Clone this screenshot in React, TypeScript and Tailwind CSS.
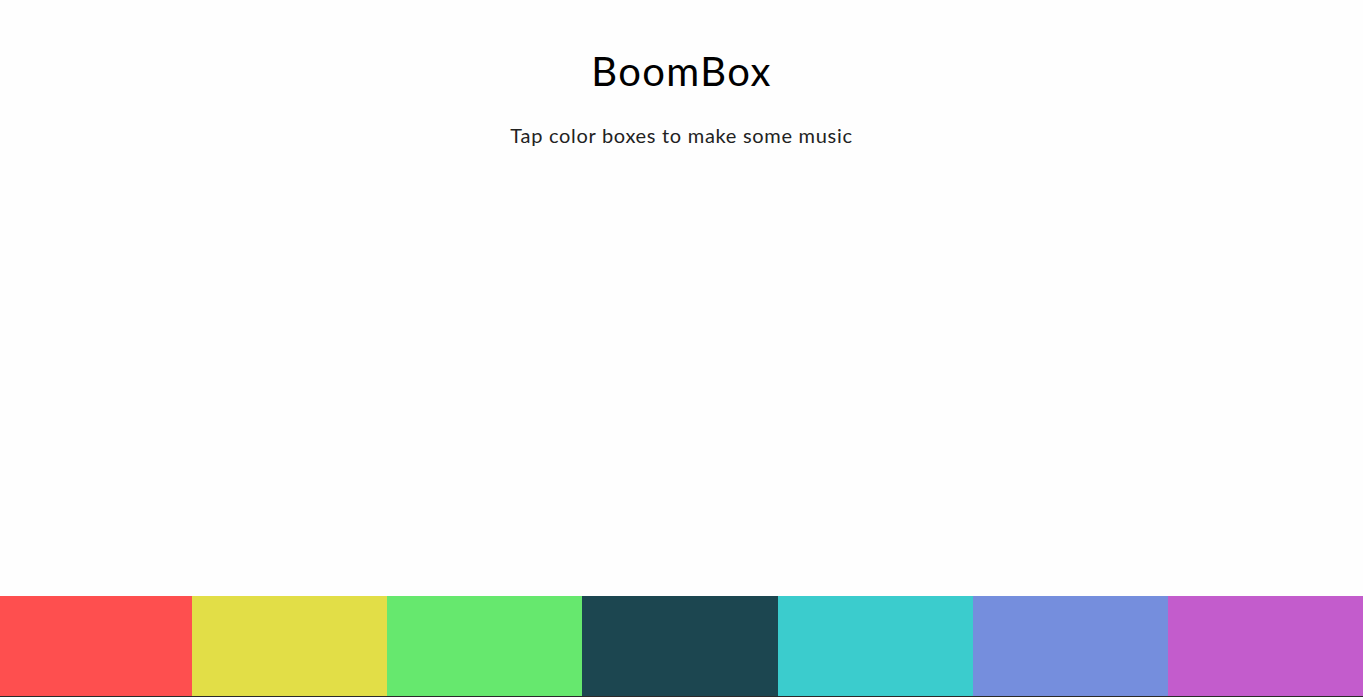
const boxes = [
  "bg-[#fe4f4f] w-[192px]",
  "bg-[#e2de47] flex-1",
  "bg-[#66e86e] flex-1",
  "bg-[#1c4650] flex-1",
  "bg-[#3bcccd] flex-1",
  "bg-[#758edd] flex-1",
  "bg-[#c35ccc] flex-1",
];

export default function App() {
  return (
    <div className="h-[697px] w-full bg-[#fefefe] flex flex-col font-['Lato',sans-serif] text-black overflow-hidden">
      <header className="flex flex-col items-center pt-[46px]">
        <h1 className="text-[40px] leading-[50px] font-normal tracking-[1.4px]">BoomBox</h1>
        <p className="mt-[25px] text-[20px] leading-[28px] text-[#222] tracking-[0.7px]">
          Tap color boxes to make some music
        </p>
      </header>
      <div className="flex-1" />
      <div className="flex h-[100px]">
        {boxes.map((c, i) => (
          <button key={i} className={`${c} h-full cursor-pointer`} />
        ))}
      </div>
      <div className="h-px bg-[#2a2a2a]" />
    </div>
  );
}
